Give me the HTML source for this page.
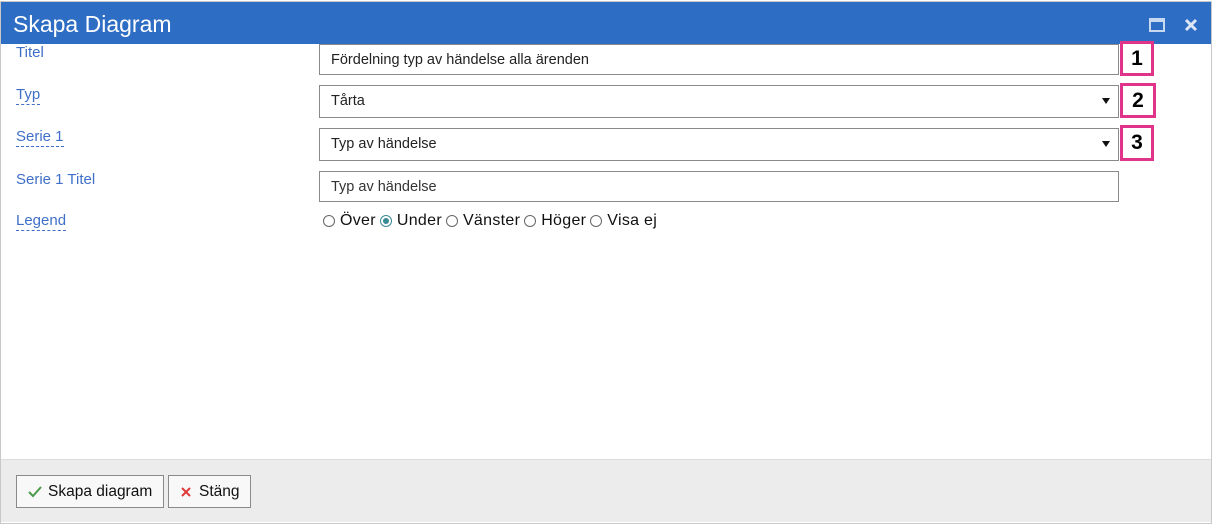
<!DOCTYPE html>
<html><head><meta charset="utf-8"><style>
*{box-sizing:border-box;margin:0;padding:0}
body{width:1213px;height:525px;background:#fff;font-family:"Liberation Sans",Arial,sans-serif;position:relative;overflow:hidden}
.frame{position:absolute;left:0;top:1px;width:1212px;height:523px;border:1px solid #c8c8c8;background:#fff}
.bar{position:absolute;left:1px;top:2px;width:1210px;height:42px;background:#2e6dc4;color:#fff;font-size:23px;padding:9px 0 0 12px}
.lbl{position:absolute;left:16px;color:#3f6fc8;font-size:15px}
.dash{border-bottom:1px dashed #3f6fc8;padding-bottom:1px}
.inp{position:absolute;left:319px;width:800px;border:1px solid #8a8a8a;background:#fff;font-size:14.5px;color:#222;padding-left:11px}
.arr{position:absolute;right:8px;top:12px;width:0;height:0;border-left:4px solid transparent;border-right:4px solid transparent;border-top:6px solid #111}
.num{position:absolute;left:1120px;width:34px;border:3px solid #e0338a;font-weight:bold;font-size:21px;text-align:center;color:#000}
.radios{position:absolute;left:323px;top:212px;font-size:16px;color:#111;display:flex;align-items:center}
.r{display:inline-block;width:12px;height:12px;border:1px solid #666;border-radius:50%;margin:0 5px 0 0;position:relative}
.r.on{border-color:#3a8a95}
.r.on:after{content:"";position:absolute;left:2px;top:2px;width:6px;height:6px;border-radius:50%;background:#3a8a95}
.rl{margin-right:4px;letter-spacing:0.3px}
.foot{position:absolute;left:1px;top:459px;width:1210px;height:63px;background:#ececec;border-top:1px solid #ddd}
.btn{position:absolute;top:475px;height:33px;border:1px solid #8a8a8a;background:#f8f8f8;font-size:15.5px;color:#111;display:flex;align-items:center;padding-left:10px}
</style></head><body>
<div class="frame"></div>
<div class="bar">Skapa Diagram
<svg style="position:absolute;left:1148px;top:16px" width="16" height="14"><rect x="1" y="1" width="14" height="12" fill="none" stroke="#c8d8f0" stroke-width="2"/><rect x="1" y="1" width="14" height="3" fill="#c8d8f0"/></svg>
<svg style="position:absolute;left:1183px;top:16px" width="14" height="14"><path d="M2 2L12 12M12 2L2 12" stroke="#dde6f5" stroke-width="3"/></svg>
</div>
<div class="lbl" style="top:44px">Titel</div>
<div class="lbl" style="top:86px"><span class="dash">Typ</span></div>
<div class="lbl" style="top:128px"><span class="dash">Serie 1</span></div>
<div class="lbl" style="top:171px">Serie 1 Titel</div>
<div class="lbl" style="top:212px"><span class="dash">Legend</span></div>
<div class="inp" style="top:44px;height:31px;line-height:30px">Fördelning typ av händelse alla ärenden</div>
<div class="inp" style="top:85px;height:33px;line-height:31px">Tårta<span class="arr"></span></div>
<div class="inp" style="top:128px;height:33px;line-height:31px">Typ av händelse<span class="arr"></span></div>
<div class="inp" style="top:171px;height:31px;line-height:30px;color:#333">Typ av händelse</div>
<div class="num" style="top:41px;height:35px;line-height:29px">1</div>
<div class="num" style="top:83px;height:35px;line-height:29px;width:36px">2</div>
<div class="num" style="top:125px;height:36px;line-height:30px">3</div>
<div class="radios"><span class="r"></span><span class="rl">Över</span><span class="r on"></span><span class="rl">Under</span><span class="r"></span><span class="rl">Vänster</span><span class="r"></span><span class="rl">Höger</span><span class="r"></span><span class="rl">Visa ej</span></div>
<div class="foot"></div>
<div class="btn" style="left:16px;width:148px"><svg width="16" height="14" style="margin-right:5px"><path d="M2 7L6 11L14 2" stroke="#4a9a4a" stroke-width="2" fill="none"/></svg>Skapa diagram</div>
<div class="btn" style="left:168px;width:83px"><svg width="14" height="14" style="margin-right:6px"><path d="M3 3L11 11M11 3L3 11" stroke="#e03a3a" stroke-width="2"/></svg>Stäng</div>
</body></html>
